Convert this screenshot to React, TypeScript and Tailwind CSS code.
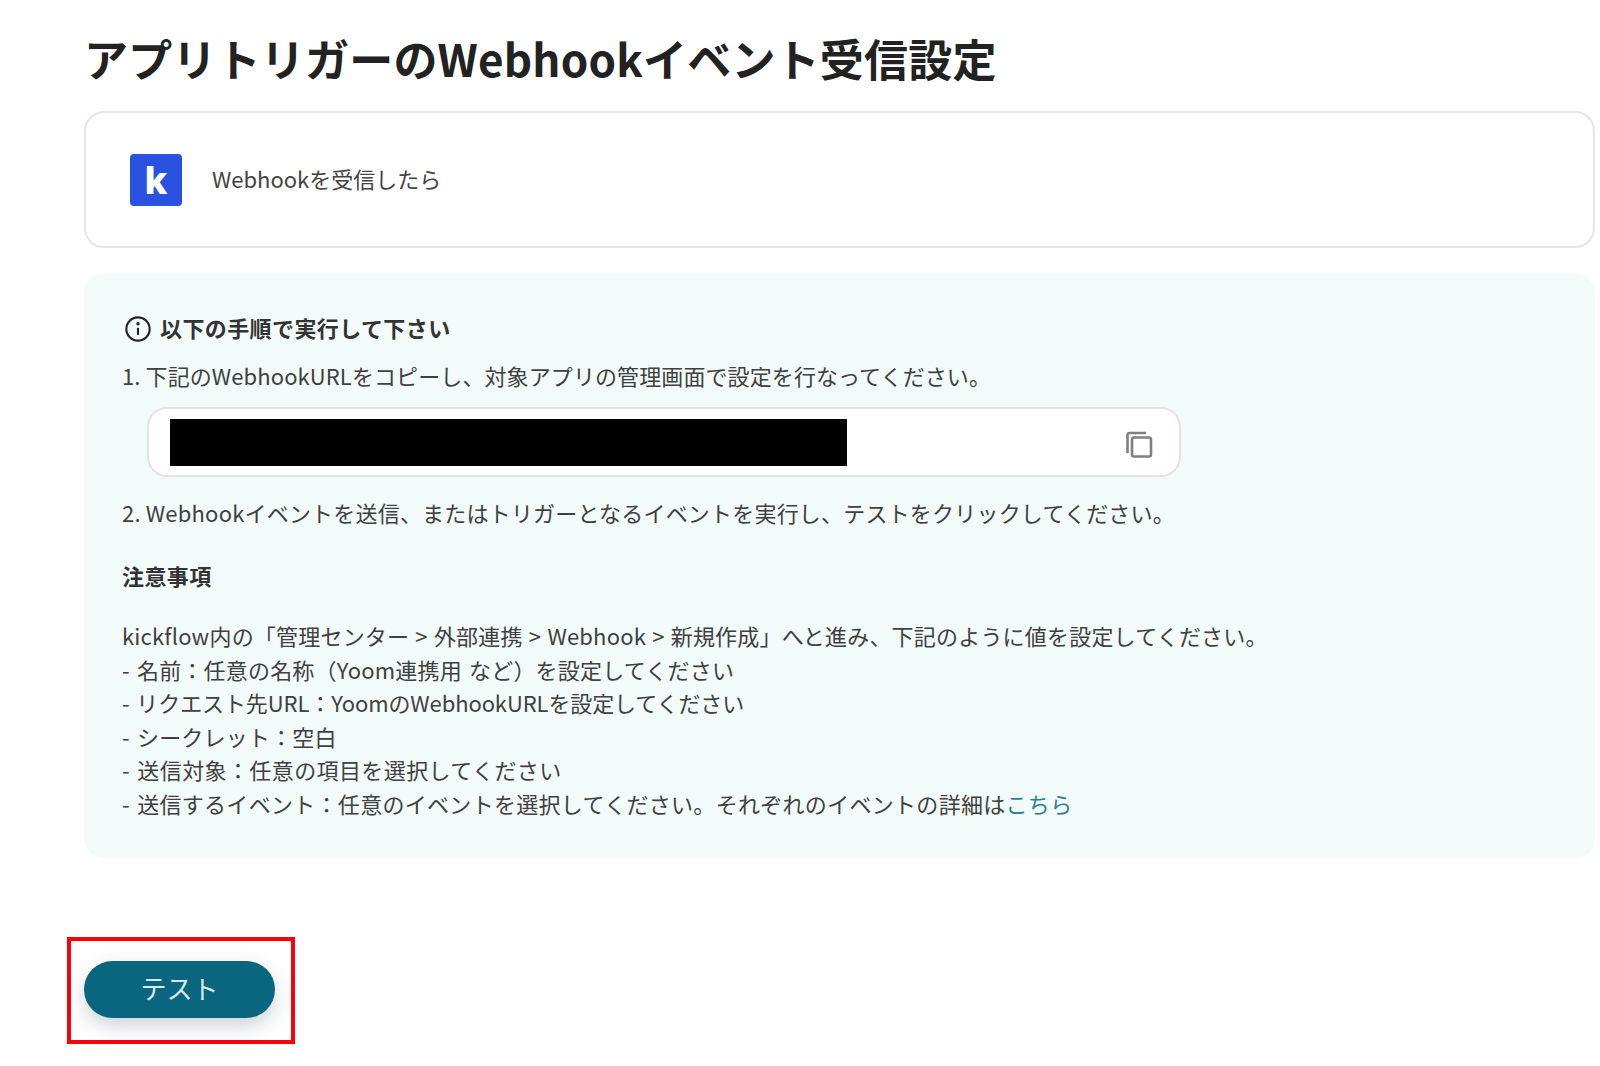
import React from "react";

const font = { fontFamily: '"Noto Sans CJK JP", "Noto Sans", sans-serif' };

export default function App() {
  return (
    <div className="w-[1600px] h-[1066px] bg-white overflow-hidden pl-[84px] pr-[5px] pt-[28px] text-[#404040]" style={font}>
      <h1 className="text-[44px] leading-[60px] font-bold text-[#222222] tracking-[0.2px]">アプリトリガーのWebhookイベント受信設定</h1>
      <div className="mt-[23px] h-[137px] rounded-[20px] border-2 border-[#e6e6e6] flex items-center pl-[44px] gap-[30px]">
        <div className="w-[52px] h-[52px] rounded-[4px] bg-[#2a52e0] flex items-center justify-center text-white text-[38px] font-extrabold leading-none font-['Inter'] mt-[1px]">k</div>
        <span className="text-[22px] text-[#444444] tracking-[0px] -mt-[2px]">Webhookを受信したら</span>
      </div>
      <div className="mt-[25px] h-[585px] rounded-[20px] bg-[#f2fbfa] pl-[38px] pt-[40px]">
        <div className="flex items-center gap-[8px] h-[32px] pl-[2px]">
          <svg width="28" height="28" viewBox="0 0 24 24" fill="none" stroke="#222222" strokeWidth="1.8">
            <circle cx="12" cy="12" r="10" />
            <path d="M12 11v6" />
            <circle cx="12" cy="7.5" r="0.6" fill="#222222" />
          </svg>
          <span className="text-[22px] font-bold text-[#333333] tracking-[0.4px] -mt-[4px]">以下の手順で実行して下さい</span>
        </div>
        <p className="mt-[13px] text-[22px] leading-[34px] tracking-[0.1px]">1. 下記のWebhookURLをコピーし、対象アプリの管理画面で設定を行なってください。</p>
        <div className="mt-[15px] ml-[25px] w-[1034px] h-[70px] rounded-[20px] border-2 border-[#e4e4e4] bg-white flex items-center justify-between pl-[21px] pr-[24px]">
          <div className="w-[677px] h-[47px] bg-black" />
          <svg width="30" height="30" viewBox="0 0 30 30" fill="none" stroke="#808080" strokeWidth="2.6" className="mt-[5px]">
            <path d="M2.5 23V5a2 2 0 0 1 2-2H21" />
            <rect x="7" y="7.5" width="19" height="19" rx="2" />
          </svg>
        </div>
        <p className="mt-[18px] text-[22px] leading-[34px] tracking-[0.2px]">2. Webhookイベントを送信、またはトリガーとなるイベントを実行し、テストをクリックしてください。</p>
        <p className="mt-[29px] text-[22px] leading-[34px] font-bold text-[#333333] tracking-[0.4px]">注意事項</p>
        <div className="mt-[27px] text-[22px] leading-[33.5px] tracking-[0.2px] [word-spacing:2px]">
          <p className="[word-spacing:1px]">kickflow内の「管理センター &gt; 外部連携 &gt; Webhook &gt; 新規作成」へと進み、下記のように値を設定してください。</p>
          <p>- 名前：任意の名称（Yoom連携用 など）を設定してください</p>
          <p className="tracking-[-0.1px]">- リクエスト先URL：YoomのWebhookURLを設定してください</p>
          <p>- シークレット：空白</p>
          <p className="tracking-[0.4px]">- 送信対象：任意の項目を選択してください</p>
          <p className="tracking-[0.3px]">- 送信するイベント：任意のイベントを選択してください。それぞれのイベントの詳細は<span className="text-[#2a8096]">こちら</span></p>
        </div>
      </div>
      <div className="mt-[79px] -ml-[17px] w-[228px] h-[107px] border-[4px] border-[#fb0007] pl-[13px] pt-[20px]">
        <button className="w-[191px] h-[57px] rounded-full bg-[#09667e] text-[#d9e8ec] text-[26px] leading-[50px] pb-[3px] shadow-[0_8px_20px_rgba(30,60,80,0.22)]">テスト</button>
      </div>
    </div>
  );
}
